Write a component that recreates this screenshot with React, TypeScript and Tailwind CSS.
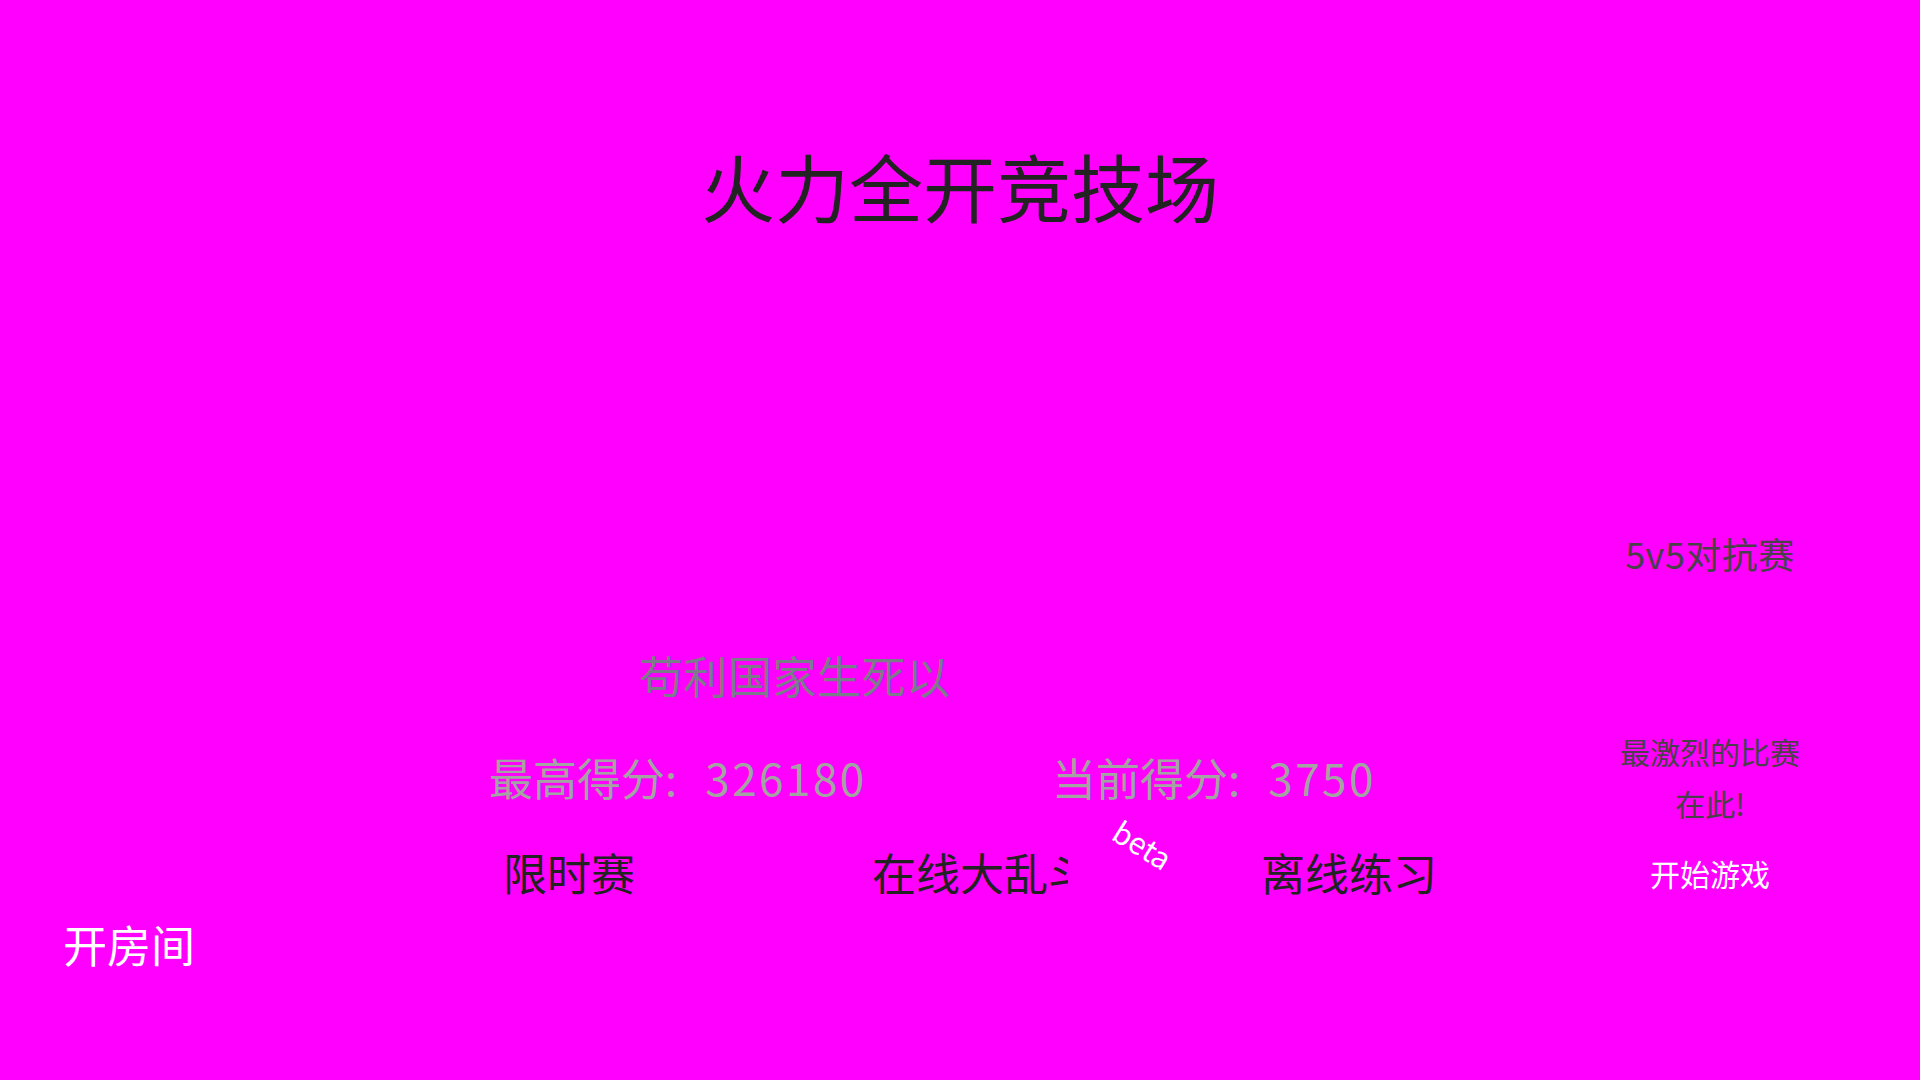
import React from 'react';

const modes = ['限时赛', '在线大乱斗', '离线练习'];

export default function App() {
  return (
    <div className="w-full h-screen overflow-hidden bg-[#ff00ff] font-['Noto_Sans_CJK_SC',sans-serif] flex flex-col">
      {/* Title */}
      <h1 className="pt-[148px] text-center text-[74px] leading-none text-[#222]">火力全开竞技场</h1>

      <div className="flex items-start">
        {/* Main area */}
        <div className="flex-1 flex flex-col">
          <div className="mt-[431px] ml-[639px] text-[44px] leading-none tracking-[0.5px] text-[#7b7b8b] whitespace-nowrap">
            苟利国家生死以
          </div>

          {/* Scores */}
          <div className="mt-[58px] ml-[489px] flex text-[44px] leading-none text-[#a3a3a3] whitespace-nowrap">
            <div className="w-[563px]">
              最高得分:<span className="ml-[28px] tracking-[2.5px]">326180</span>
            </div>
            <div>
              当前得分:<span className="ml-[28px] tracking-[2.5px]">3750</span>
            </div>
          </div>

          {/* Modes */}
          <div className="mt-[51px] ml-[503px] flex text-[44px] leading-none text-[#222] whitespace-nowrap">
            <button className="w-[369px] text-left">{modes[0]}</button>
            <div className="w-[389px] relative">
              <button className="w-[196px] overflow-hidden text-left">{modes[1]}</button>
              <span className="absolute left-[240px] top-[-21px] rotate-[32deg] text-[30px] leading-none text-white">
                beta
              </span>
            </div>
            <button className="text-left">{modes[2]}</button>
          </div>
        </div>

        {/* Right column */}
        <div className="w-[300px] mr-[60px] flex flex-col items-center text-center">
          <div className="mt-[313px] text-[36px] leading-none tracking-[0.5px] text-[#4a404a]">5v5对抗赛</div>
          <p className="mt-[154px] text-[30px] leading-[52px] text-[#4a404a]">
            最激烈的比赛
            <br />
            在此!
          </p>
          <button className="mt-[29px] text-[30px] leading-none text-white">开始游戏</button>
        </div>
      </div>

      <button className="mt-[28px] ml-[63px] self-start text-[44px] leading-none text-white">开房间</button>
    </div>
  );
}
